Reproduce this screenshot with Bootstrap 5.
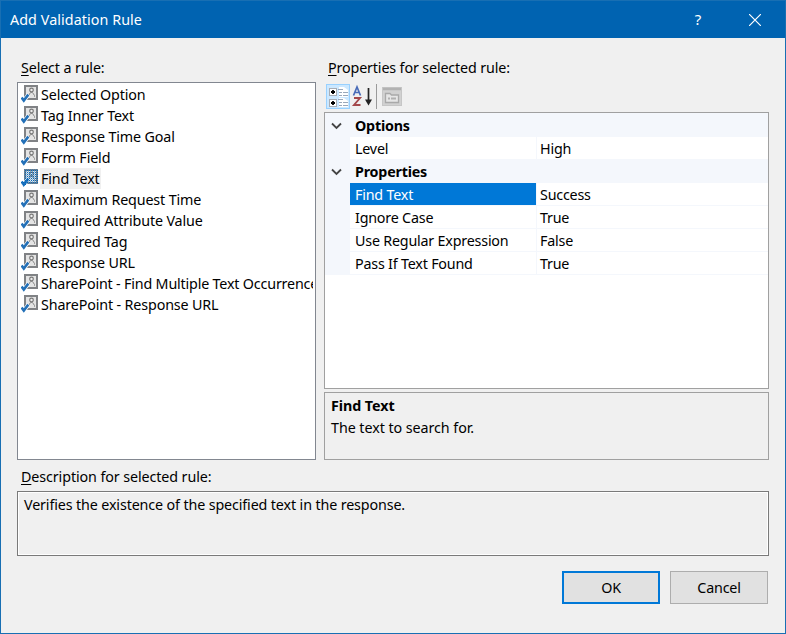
<!DOCTYPE html>
<html lang="en">
<head>
<meta charset="utf-8">
<title>Add Validation Rule</title>
<link href="https://cdn.jsdelivr.net/npm/bootstrap@5.3.0/dist/css/bootstrap.min.css" rel="stylesheet">
<style>
body{font-family:"Noto Sans","Open Sans",sans-serif;font-size:14.3px;letter-spacing:-.14px;line-height:21px;color:#000;background:#f0f0f0}
.dialog{width:786px;height:634px;border:1px solid #186fb3;background:#f0f0f0}
.titlebar{height:37px;background:#0063b1;padding-left:9px;letter-spacing:.08px}
.help-btn{width:58px;font-size:15px}
.close-btn{width:58px;padding-right:2px}
.content{padding:19px 16px 0}
.cap{height:25px;padding-left:4px;line-height:22px}
.cap u,.cap-d u{text-underline-offset:2px}
.left{width:299px}
.right{width:445px}
.rules{height:378px;border:1px solid #828790;padding:1px 2px 0 3px;background:#fff}
.rule{height:21px}
.rule span{padding:1px 1px 0;line-height:20px}
.rule .long-name{letter-spacing:-.18px}
.rule.active-rule span{background:#f0f0f0}
.rule svg{margin-right:1px}
.tools{height:30px;padding:2px 0 0 2px}
.tool-on{width:24px;height:25px;background:#cce8ff;border:1px solid #99d1ff}
.tool-sep{width:1px;height:25px;background:#9a9a9a;margin:0 5px 0 2px}
.props{height:277px;border:1px solid #a0a0a0;padding-top:1px;background:linear-gradient(#f4f7fc 1px,#fff 1px)}
.prow{height:23px;line-height:24px;letter-spacing:-.2px}
.gut{width:25px;padding-right:2px;background:#f4f7fc}
.group-row{background:#f4f7fc;font-weight:700;letter-spacing:-.2px}
.gname{padding-left:5px}
.pname{width:186px;padding-left:5px;border-bottom:1px solid #f4f7fc}
.pval{padding-left:3px;border-left:1px solid #f4f7fc;border-bottom:1px solid #f4f7fc}
.picked{background:#0078d7;color:#fff}
.hint{height:68px;margin-top:3px;border:1px solid #a0a0a0;padding:2px 6px;letter-spacing:-.06px}
.hint div{height:22px;line-height:22px}
.cap-d{height:31px;padding:6px 0 0 4px;letter-spacing:-.1px}
.desc{height:65px;border:1px solid #7a7a7a;box-shadow:inset 0 0 0 1px #fff;padding:2px 6px;letter-spacing:-.13px}
.dlg-actions{gap:10px;padding:15px 1px 0}
.dlg-btn{width:98px;height:33px;border-radius:0;background:#e1e1e1;border:1px solid #adadad;font-size:14.3px;padding:0;color:#000;letter-spacing:-.2px}
.dlg-btn.main-btn{border:2px solid #0078d7}
</style>
<script src="https://cdn.jsdelivr.net/npm/bootstrap@5.3.0/dist/js/bootstrap.bundle.min.js"></script>
</head>
<body class="overflow-hidden">
<svg class="d-none">
<symbol id="rule-ico" viewBox="0 0 18 19">
<rect x="4" y="2" width="12" height="13" fill="#e4e4e4" stroke="#808285" stroke-width="2"/>
<circle cx="10.500" cy="6" r="1.800" fill="#eee" stroke="#777" stroke-width="1.200"/>
<path d="M7.600 12.700V11.500L9.500 8.500H11.500L13.500 11.500V12.700" fill="none" stroke="#888"/>
<path d="M0 13.200L2.800 16.800L7.500 10.500" fill="none" stroke="#fff" stroke-width="4"/>
<path d="M.6 13.600L2.800 16.600L7.300 10.600" fill="none" stroke="#2370b7" stroke-width="2.600"/>
</symbol>
</svg>
<div class="dialog d-flex flex-column">
<header class="titlebar d-flex align-items-center text-white">
<span class="me-auto">Add Validation Rule</span>
<span class="help-btn text-center">?</span>
<span class="close-btn d-flex justify-content-center"><svg width="12" height="12"><path d="M0 0L12 12M12 0L0 12" stroke="#fff" stroke-width="1.200"/></svg></span>
</header>
<main class="content">
<div class="d-flex justify-content-between">
<section class="left">
<div class="cap"><u>S</u>elect a rule:</div>
<div class="rules overflow-hidden text-nowrap">
<div class="rule d-flex"><svg class="flex-shrink-0" width="18" height="19"><use href="#rule-ico"/></svg><span>Selected Option</span></div>
<div class="rule d-flex"><svg class="flex-shrink-0" width="18" height="19"><use href="#rule-ico"/></svg><span>Tag Inner Text</span></div>
<div class="rule d-flex"><svg class="flex-shrink-0" width="18" height="19"><use href="#rule-ico"/></svg><span>Response Time Goal</span></div>
<div class="rule d-flex"><svg class="flex-shrink-0" width="18" height="19"><use href="#rule-ico"/></svg><span>Form Field</span></div>
<div class="rule active-rule d-flex"><svg class="flex-shrink-0" width="18" height="19"><defs><pattern id="dots" width="2" height="2" patternUnits="userSpaceOnUse"><rect width="1" height="1" fill="#0068bd"/><rect x="1" y="1" width="1" height="1" fill="#0078d7" fill-opacity=".45"/></pattern></defs><use href="#rule-ico"/><path d="M3 1H17V16H6L3 19L0 15V13H3Z" fill="url(#dots)"/></svg><span>Find Text</span></div>
<div class="rule d-flex"><svg class="flex-shrink-0" width="18" height="19"><use href="#rule-ico"/></svg><span>Maximum Request Time</span></div>
<div class="rule d-flex"><svg class="flex-shrink-0" width="18" height="19"><use href="#rule-ico"/></svg><span>Required Attribute Value</span></div>
<div class="rule d-flex"><svg class="flex-shrink-0" width="18" height="19"><use href="#rule-ico"/></svg><span>Required Tag</span></div>
<div class="rule d-flex"><svg class="flex-shrink-0" width="18" height="19"><use href="#rule-ico"/></svg><span>Response URL</span></div>
<div class="rule d-flex"><svg class="flex-shrink-0" width="18" height="19"><use href="#rule-ico"/></svg><span class="long-name overflow-hidden">SharePoint - Find Multiple Text Occurrences</span></div>
<div class="rule d-flex"><svg class="flex-shrink-0" width="18" height="19"><use href="#rule-ico"/></svg><span>SharePoint - Response URL</span></div>
</div>
</section>
<section class="right">
<div class="cap"><u>P</u>roperties for selected rule:</div>
<div class="tools d-flex align-items-start">
<div class="tool-on"><svg class="d-block" width="22" height="23">
<g fill="#fff" stroke="#a8adb5"><rect x="2.500" y="3.500" width="7" height="7"/><rect x="2.500" y="14.500" width="7" height="7"/></g>
<path d="M4 7h4M6 5v4M4 18h4M6 16v4" stroke="#000" stroke-width="1.800"/>
<path d="M12 2h5l4 3v7h-9zM12 13h5l4 3v6h-9z" fill="#fff"/>
<path d="M11 4.500h5M12 7.500h3M16 7.500h5M12 10.500h3M16 10.500h5M11 14.500h5M12 17.500h3M16 17.500h5M12 20.500h3M16 20.500h5" stroke="#9aa8ba"/></svg></div>
<svg width="24" height="25"><path d="M3.500 11.500L7 3L10.500 11.500M4.700 8.500h4.600" fill="none" stroke="#4a6cb8" stroke-width="1.700"/><path d="M4 14H10L4 21H10.500" fill="none" stroke="#a4484a" stroke-width="1.900"/><path d="M18.500 4v13" stroke="#222" stroke-width="1.700"/><path d="M15 15.500h7l-3.500 6z" fill="#222"/></svg>
<div class="tool-sep"></div>
<svg width="20" height="25"><rect x=".5" y="3.500" width="19" height="18" fill="#d1d1d1" stroke="#c6c6c6"/><path d="M1 5h18" stroke="#b2b2b2" stroke-width="2.500"/><path d="M3.500 18.500V9.500H8l1.500 1.500h7v7.500z" fill="#e6e6e6" stroke="#a9a9a9" stroke-width="1.300"/><path d="M6 14.500h2m1 0h5" stroke="#b0b0b0" stroke-width="2"/></svg>
</div>
<div class="props">
<div class="prow group-row d-flex"><div class="gut d-flex align-items-center justify-content-center"><svg width="11" height="8"><path d="M1 1.500L5.500 6L10 1.500" fill="none" stroke="#444" stroke-width="1.800"/></svg></div><div class="gname">Options</div></div>
<div class="prow d-flex"><div class="gut"></div><div class="pname">Level</div><div class="pval flex-grow-1">High</div></div>
<div class="prow group-row d-flex"><div class="gut d-flex align-items-center justify-content-center"><svg width="11" height="8"><path d="M1 1.500L5.500 6L10 1.500" fill="none" stroke="#444" stroke-width="1.800"/></svg></div><div class="gname">Properties</div></div>
<div class="prow d-flex"><div class="gut"></div><div class="pname picked">Find Text</div><div class="pval flex-grow-1">Success</div></div>
<div class="prow d-flex"><div class="gut"></div><div class="pname">Ignore Case</div><div class="pval flex-grow-1">True</div></div>
<div class="prow d-flex"><div class="gut"></div><div class="pname">Use Regular Expression</div><div class="pval flex-grow-1">False</div></div>
<div class="prow d-flex"><div class="gut"></div><div class="pname">Pass If Text Found</div><div class="pval flex-grow-1">True</div></div>
</div>
<div class="hint"><div><b>Find Text</b></div><div>The text to search for.</div></div>
</section>
</div>
<div class="cap-d"><u>D</u>escription for selected rule:</div>
<div class="desc">Verifies the existence of the specified text in the response.</div>
<div class="d-flex justify-content-end dlg-actions">
<button class="btn dlg-btn main-btn">OK</button>
<button class="btn dlg-btn">Cancel</button>
</div>
</main>
</div>
</body>
</html>
